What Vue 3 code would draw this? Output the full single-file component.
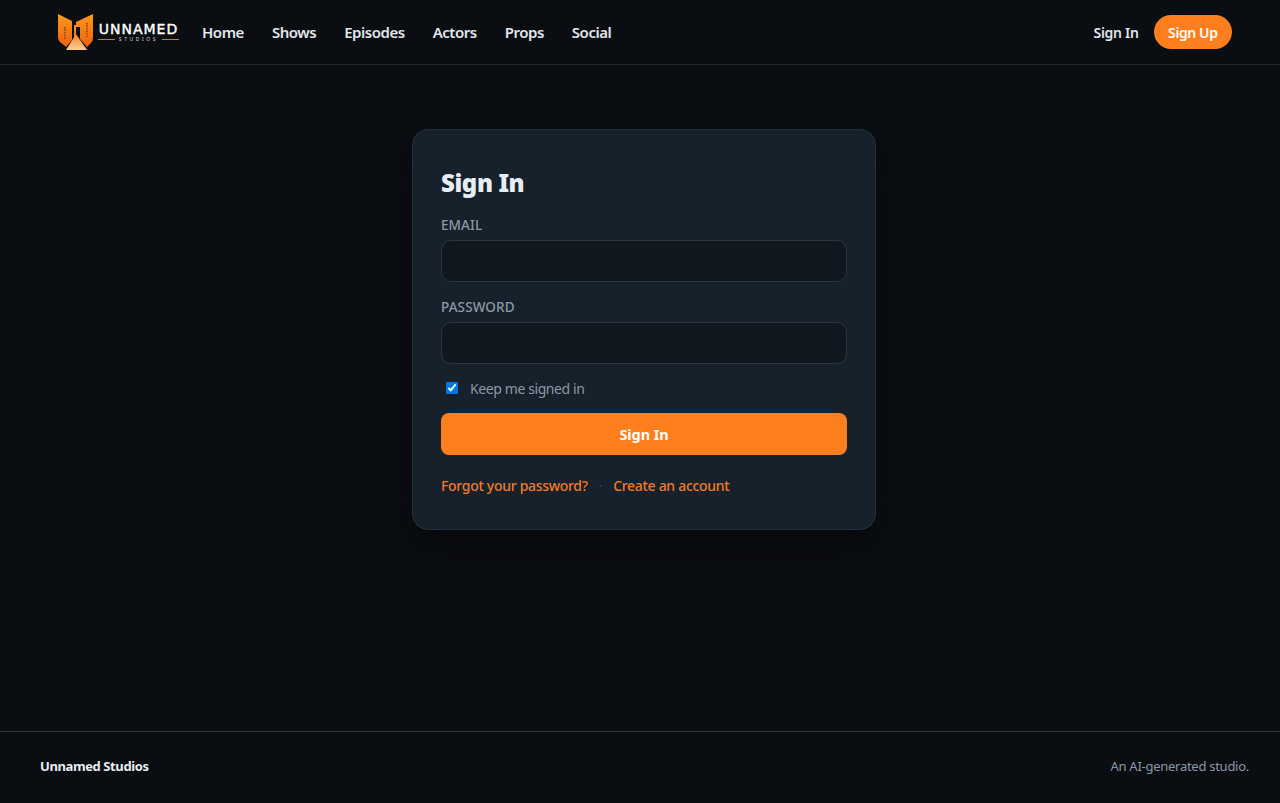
<script setup>
import { ref } from 'vue';

const navItems = ['Home', 'Shows', 'Episodes', 'Actors', 'Props', 'Social'];
const email = ref('');
const password = ref('');
const keepSignedIn = ref(true);
</script>

<template>
  <div class="page">
    <header class="site-header">
      <div class="header-left">
        <a class="logo" href="#">
          <svg class="logo-mark" viewBox="0 0 37 38" width="37" height="38">
            <defs>
              <linearGradient id="wing" x1="0" y1="0" x2="0" y2="1">
                <stop offset="0" stop-color="#ff9a1c" />
                <stop offset="1" stop-color="#ee5f0e" />
              </linearGradient>
              <linearGradient id="door" x1="0" y1="0" x2="0" y2="1">
                <stop offset="0" stop-color="#f08420" />
                <stop offset="1" stop-color="#ffcf96" />
              </linearGradient>
            </defs>
            <path d="M1 1 L15 8 V27 L9 34 L3 29 Q1 27 1 24 Z" fill="url(#wing)" />
            <path d="M36 1 L19 9 V14 H23 V26 L30 34 L34 30 Q36 28 36 24 Z" fill="url(#wing)" />
            <path d="M17 12 H19 V24 H17 Z" fill="#f58a1e" />
            <path d="M19 21 L30 37 H9 Z" fill="url(#door)" />
            <path d="M8 14 V26 M30 10 V24" stroke="#8a4008" stroke-width="1.6" stroke-dasharray="1.4 1.2" fill="none" />
          </svg>
          <span class="logo-text">
            <span class="logo-name">UNNAMED</span>
            <span class="logo-sub"><i></i><b>STUDIOS</b><i></i></span>
          </span>
        </a>
        <nav class="main-nav">
          <a v-for="item in navItems" :key="item" href="#">{{ item }}</a>
        </nav>
      </div>
      <div class="header-right">
        <a class="signin-link" href="#">Sign In</a>
        <a class="signup-btn" href="#">Sign Up</a>
      </div>
    </header>

    <main class="content">
      <form class="card" @submit.prevent>
        <h1>Sign In</h1>
        <label class="field">
          <span>EMAIL</span>
          <input v-model="email" type="email" />
        </label>
        <label class="field">
          <span>PASSWORD</span>
          <input v-model="password" type="password" />
        </label>
        <label class="keep">
          <input v-model="keepSignedIn" type="checkbox" />
          <span>Keep me signed in</span>
        </label>
        <button class="submit" type="submit">Sign In</button>
        <div class="links">
          <a href="#">Forgot your password?</a>
          <span class="dot">·</span>
          <a href="#">Create an account</a>
        </div>
      </form>
    </main>

    <footer class="site-footer">
      <strong>Unnamed Studios</strong>
      <span>An AI-generated studio.</span>
    </footer>
  </div>
</template>

<style>
html, body {
  margin: 0;
  background: #0a0d12;
}
</style>

<style scoped>
.page {
  min-height: 803px;
  display: flex;
  flex-direction: column;
  background: #0a0d12;
  color: #e6edf3;
  font-family: "Noto Sans", "Open Sans", sans-serif;
}

a {
  text-decoration: none;
}

.site-header {
  height: 64px;
  display: flex;
  align-items: center;
  justify-content: space-between;
  padding: 0 48px 0 57px;
  border-bottom: 1px solid #23272d;
}

.header-left {
  display: flex;
  align-items: center;
  gap: 23px;
}

.logo {
  display: flex;
  align-items: center;
  gap: 4px;
  width: 122px;
}

.logo-mark {
  flex: none;
}

.logo-text {
  display: flex;
  flex-direction: column;
  align-items: center;
  width: 81px;
}

.logo-name {
  font-family: "DejaVu Sans", sans-serif;
  font-size: 14px;
  line-height: 14px;
  letter-spacing: 1px;
  color: #fff;
  -webkit-text-stroke: 0.4px #fff;
  white-space: nowrap;
}

.logo-sub {
  display: flex;
  align-items: center;
  gap: 4px;
  width: 100%;
  height: 7px;
}

.logo-sub i {
  flex: 1;
  height: 1px;
  background: #e8701a;
}

.logo-sub b {
  font-size: 5px;
  line-height: 7px;
  font-weight: 400;
  letter-spacing: 2.6px;
  color: #d8d8d8;
}

.main-nav {
  display: flex;
  gap: 28px;
}

.main-nav a {
  font-size: 15px;
  font-weight: 600;
  color: #e1e6eb;
  letter-spacing: -0.47px;
}

.header-right {
  display: flex;
  align-items: center;
  gap: 15px;
}

.signin-link {
  font-size: 14px;
  font-weight: 600;
  letter-spacing: -0.3px;
  color: #e1e6eb;
}

.signup-btn {
  height: 34px;
  padding: 0 14.5px;
  display: flex;
  align-items: center;
  border-radius: 17px;
  background: #ff7f1e;
  color: #fff;
  font-size: 14px;
  font-weight: 600;
  letter-spacing: -0.4px;
}

.content {
  flex: 1;
  display: flex;
  justify-content: center;
  align-items: flex-start;
  padding: 64px 0 0 8px;
}

.card {
  width: 464px;
  box-sizing: border-box;
  height: 401px;
  padding: 36px 28px 0;
  background: #17212b;
  border: 1px solid #26313c;
  border-radius: 16px;
  box-shadow: 0 12px 40px rgba(0, 0, 0, 0.4);
}

h1 {
  margin: 0 0 16px;
  font-size: 24px;
  line-height: 34px;
  font-weight: 900;
  letter-spacing: -0.4px;
  color: #e6edf3;
}

.field {
  display: block;
  margin-bottom: 16px;
}

.field span {
  display: block;
  margin-bottom: 6px;
  font-size: 13.5px;
  line-height: 18px;
  font-weight: 500;
  letter-spacing: 0.1px;
  color: #8b98a6;
}

.field input {
  display: block;
  width: 100%;
  height: 42px;
  box-sizing: border-box;
  background: #10171e;
  border: 1px solid #2a3540;
  border-radius: 10px;
  color: #e6edf3;
  outline: none;
}

.keep {
  display: flex;
  align-items: center;
  height: 20px;
  gap: 12px;
  padding-left: 5px;
  margin-top: -2px;
  font-size: 14px;
  letter-spacing: -0.4px;
  color: #8b98a6;
}

.keep input {
  width: 12px;
  height: 12px;
  margin: 0;
  accent-color: #0075e6;
}

.submit {
  display: block;
  width: 100%;
  height: 42px;
  margin-top: 15px;
  border: none;
  border-radius: 8px;
  background: #ff7f1e;
  color: #fff;
  font-family: inherit;
  font-size: 14.5px;
  font-weight: 700;
  letter-spacing: -0.1px;
}

.links {
  display: flex;
  align-items: center;
  gap: 11px;
  margin-top: 21px;
  font-size: 14px;
  line-height: 20px;
  letter-spacing: -0.3px;
}

.links a {
  color: #f27a25;
  font-weight: 500;
}

.dot {
  color: #3a4753;
}

.site-footer {
  height: 71px;
  display: flex;
  align-items: center;
  justify-content: space-between;
  padding: 0 31px 0 40px;
  border-top: 1px solid #33373d;
  font-size: 13px;
}

.site-footer strong,
.site-footer span {
  margin-bottom: 3px;
}

.site-footer strong {
  font-weight: 700;
  letter-spacing: -0.4px;
  color: #e6edf3;
}

.site-footer span {
  letter-spacing: -0.27px;
  color: #8b98a6;
}
</style>
